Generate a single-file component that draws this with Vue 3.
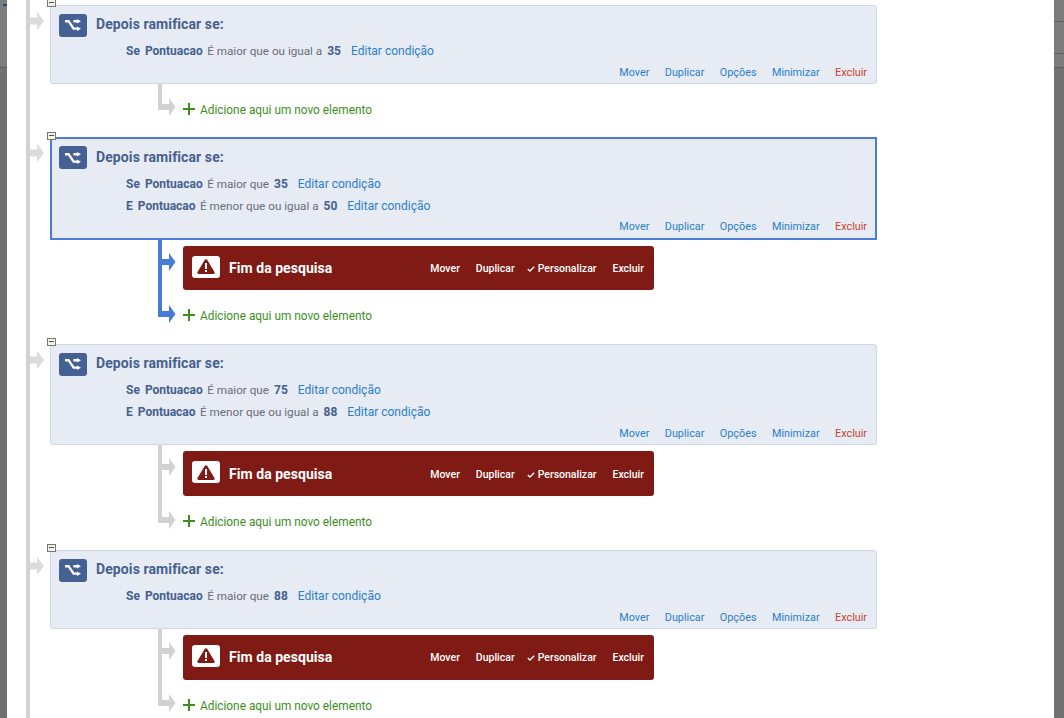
<template>
  <div class="page">
    <div class="modal">
      <div class="rail"></div>
      <section v-for="(branch, i) in branches" :key="i" class="branch">
        <div class="main-arrow">
          <svg width="14" height="18" viewBox="0 0 14 18"><path d="M0 5.500h7V0l7 9-7 9v-5.500H0z" /></svg>
        </div>
        <div :class="['block', { active: branch.active, double: branch.conditions.length > 1 }]">
          <span class="toggle"></span>
          <div class="block-head">
            <span class="block-icon">
              <svg width="18" height="12" viewBox="0 0 18 12">
                <path d="M1 2.200h3.600l5 7.400h4M9.400 2.200h4" fill="none" stroke="#fff" stroke-width="2.400" />
                <path d="M13 0l4 2.300-4 2.300zM13 7.400l4 2.300-4 2.300z" fill="#fff" />
              </svg>
            </span>
            <span class="block-title">Depois ramificar se:</span>
          </div>
          <div class="conditions">
            <div v-for="cond in branch.conditions" :key="cond.join" class="condition">
              <b>{{ cond.join }}</b>
              <b>Pontuacao</b>
              <span class="op">{{ cond.op }}</span>
              <b>{{ cond.value }}</b>
              <a class="edit">Editar condição</a>
            </div>
          </div>
          <div class="actions">
            <a>Mover</a><a>Duplicar</a><a>Opções</a><a>Minimizar</a><a class="danger">Excluir</a>
          </div>
        </div>
        <div :class="['children', { active: branch.active }]">
          <div class="line"></div>
          <div v-if="branch.end" class="end-block">
            <svg class="child-arrow" width="18" height="18" viewBox="0 0 18 18"><path d="M0 6h11V0l6.500 9-6.500 9v-6H0z" /></svg>
            <span class="end-icon">
              <svg width="18" height="15" viewBox="0 0 18 15">
                <path d="M7.700 1a1.500 1.500 0 0 1 2.600 0l7.200 12a1.300 1.300 0 0 1-1.100 2H1.600a1.300 1.300 0 0 1-1.100-2z" fill="#7f1a14" />
                <rect x="8" y="4" width="2" height="6" fill="#fff" />
                <rect x="8" y="11" width="2" height="2" fill="#fff" />
              </svg>
            </span>
            <span class="end-title">Fim da pesquisa</span>
            <div class="end-actions">
              <a>Mover</a><a>Duplicar</a><a class="custom"><svg width="8" height="6" viewBox="0 0 8 6"><path d="M.8 3l2.200 2L7.200.8" fill="none" stroke="#fff" stroke-width="1.300" /></svg>Personalizar</a><a>Excluir</a>
            </div>
          </div>
          <div class="add-row">
            <svg class="child-arrow" width="18" height="18" viewBox="0 0 18 18"><path d="M0 6h11V0l6.500 9-6.500 9v-6H0z" /></svg>
            <svg class="plus" width="12" height="12" viewBox="0 0 12 12"><path d="M5 0h2v5h5v2H7v5H5V7H0V5h5z" /></svg>
            <span class="add-label">Adicione aqui um novo elemento</span>
          </div>
        </div>
      </section>
    </div>
  </div>
</template>

<script setup>
const branches = [
  {
    conditions: [{ join: 'Se', op: 'É maior que ou igual a', value: '35' }],
    end: false,
    active: false
  },
  {
    conditions: [
      { join: 'Se', op: 'É maior que', value: '35' },
      { join: 'E', op: 'É menor que ou igual a', value: '50' }
    ],
    end: true,
    active: true
  },
  {
    conditions: [
      { join: 'Se', op: 'É maior que', value: '75' },
      { join: 'E', op: 'É menor que ou igual a', value: '88' }
    ],
    end: true,
    active: false
  },
  {
    conditions: [{ join: 'Se', op: 'É maior que', value: '88' }],
    end: true,
    active: false
  }
]
</script>

<style>
html,
body {
  margin: 0;
  overflow: hidden;
}
</style>

<style scoped>
.page {
  position: relative;
  height: 718px;
  overflow: hidden;
  background: linear-gradient(to bottom, #7c7c7c 0 67px, #5f5f5f 67px 68px, #717171 68px);
  padding: 0 10px 0 7px;
  font-family: Roboto, "Liberation Sans", sans-serif;
}

/* page behind the modal: header mark on the left, header rows on the right */
.page::before {
  content: "";
  position: absolute;
  left: 3px;
  top: 4px;
  width: 4px;
  height: 2px;
  background: #1d4f7c;
}

.page::after {
  content: "";
  position: absolute;
  right: 0;
  top: 0;
  width: 10px;
  height: 68px;
  background: linear-gradient(to bottom, #7c7c7c 0 21px, #5f5f5f 21px 22px, #7c7c7c 22px 53px, #5f5f5f 53px 54px, #7c7c7c 54px 67px, #5f5f5f 67px);
}

.modal {
  position: relative;
  height: 718px;
  box-sizing: border-box;
  background: #fff;
  padding: 4.500px 0 0 43px;
}

.rail {
  position: absolute;
  left: 19px;
  top: 0;
  bottom: 0;
  width: 4px;
  background: #d2d2d2;
}

.branch {
  position: relative;
  margin-bottom: 19.500px;
}

.main-arrow {
  position: absolute;
  left: -20px;
  top: 7px;
  line-height: 0;
  fill: #dcdcdc;
}

.block {
  position: relative;
  box-sizing: border-box;
  width: 827px;
  height: 79px;
  background: #e6ebf4;
  border: 1px solid #d0d8e6;
  border-radius: 3px;
  padding: 8px 8px 0;
}

.block.double {
  height: 101.500px;
}

.block.active {
  height: 103px;
  border: 2px solid #4a7bd8;
  border-radius: 0;
  padding: 7px 7px 0;
}

.toggle {
  position: absolute;
  left: -4px;
  top: -7px;
  width: 7px;
  height: 6px;
  background: #f2f2ec;
  border: 1px solid #77776c;
}

.block.active .toggle {
  left: -5px;
}

.toggle::after {
  content: "";
  position: absolute;
  left: 1px;
  right: 1px;
  top: 2px;
  height: 1px;
  background: #55554c;
}

.block-head {
  display: flex;
  align-items: center;
  height: 23px;
}

.block-icon {
  display: flex;
  align-items: center;
  justify-content: center;
  width: 28px;
  height: 23px;
  background: #456093;
  border-radius: 3px;
}

.block-title {
  margin: 0 0 2px 9px;
  color: #45608f;
  font-size: 14px;
  font-weight: 700;
  letter-spacing: 0.1px;
}

.conditions {
  margin: 3px 0 0 67px;
}

.active .conditions {
  margin-top: 4px;
}

.condition {
  display: flex;
  align-items: center;
  height: 22px;
  font-size: 12px;
  color: #45608f;
}

.condition b {
  font-weight: 700;
  margin-right: 5px;
}

.op {
  color: #686e78;
  font-size: 11.700px;
  margin: 0 5px 0 -0.500px;
}

.edit {
  color: #2b7fc7;
  margin-left: 5px;
}

.actions {
  position: absolute;
  right: 9px;
  bottom: 3px;
  display: flex;
  gap: 15.500px;
  font-size: 10.800px;
  line-height: 14px;
  color: #2b7fc7;
}

.block.active .actions {
  right: 8px;
  bottom: 4px;
}

.danger {
  color: #c5452c;
}

.children {
  position: relative;
  padding: 16px 0 0 133px;
  fill: #d2d2d2;
}

.children:has(.end-block) {
  padding-top: 6px;
}

.children.active {
  fill: #4a7bd8;
}

.line {
  position: absolute;
  left: 108px;
  top: 0;
  bottom: 8px;
  width: 4px;
  background: #d2d2d2;
}

.children.active .line {
  background: #4a7bd8;
}

.child-arrow {
  position: absolute;
  left: -25px;
  top: 50%;
  margin-top: -10.500px;
}

.end-block {
  position: relative;
  display: flex;
  align-items: center;
  box-sizing: border-box;
  width: 471px;
  height: 45px;
  margin-bottom: 16px;
  padding: 0 10px 0 9px;
  background: #7f1a14;
  border-radius: 3px;
  color: #fff;
}

.children.active .end-block {
  height: 44px;
}

.end-block .child-arrow {
  top: 7px;
  margin-top: 0;
}

.end-icon {
  display: flex;
  align-items: center;
  justify-content: center;
  width: 28px;
  height: 22px;
  margin-top: -3px;
  background: #fff;
  border-radius: 3px;
}

.end-title {
  margin-left: 9px;
  font-size: 14px;
  font-weight: 700;
  letter-spacing: 0.05px;
}

.end-actions {
  display: flex;
  gap: 16px;
  margin: 1px 0 0 auto;
  font-size: 10.500px;
  font-weight: 500;
}

.custom {
  margin-left: -4px;
}

.custom svg {
  margin-right: 3px;
}

.add-row {
  position: relative;
  display: flex;
  align-items: center;
  height: 18px;
  color: #3d8f1d;
  font-size: 11.850px;
}

.add-label {
  padding-top: 2px;
}

.plus {
  fill: #3d8f1d;
  margin-right: 5px;
}
</style>
